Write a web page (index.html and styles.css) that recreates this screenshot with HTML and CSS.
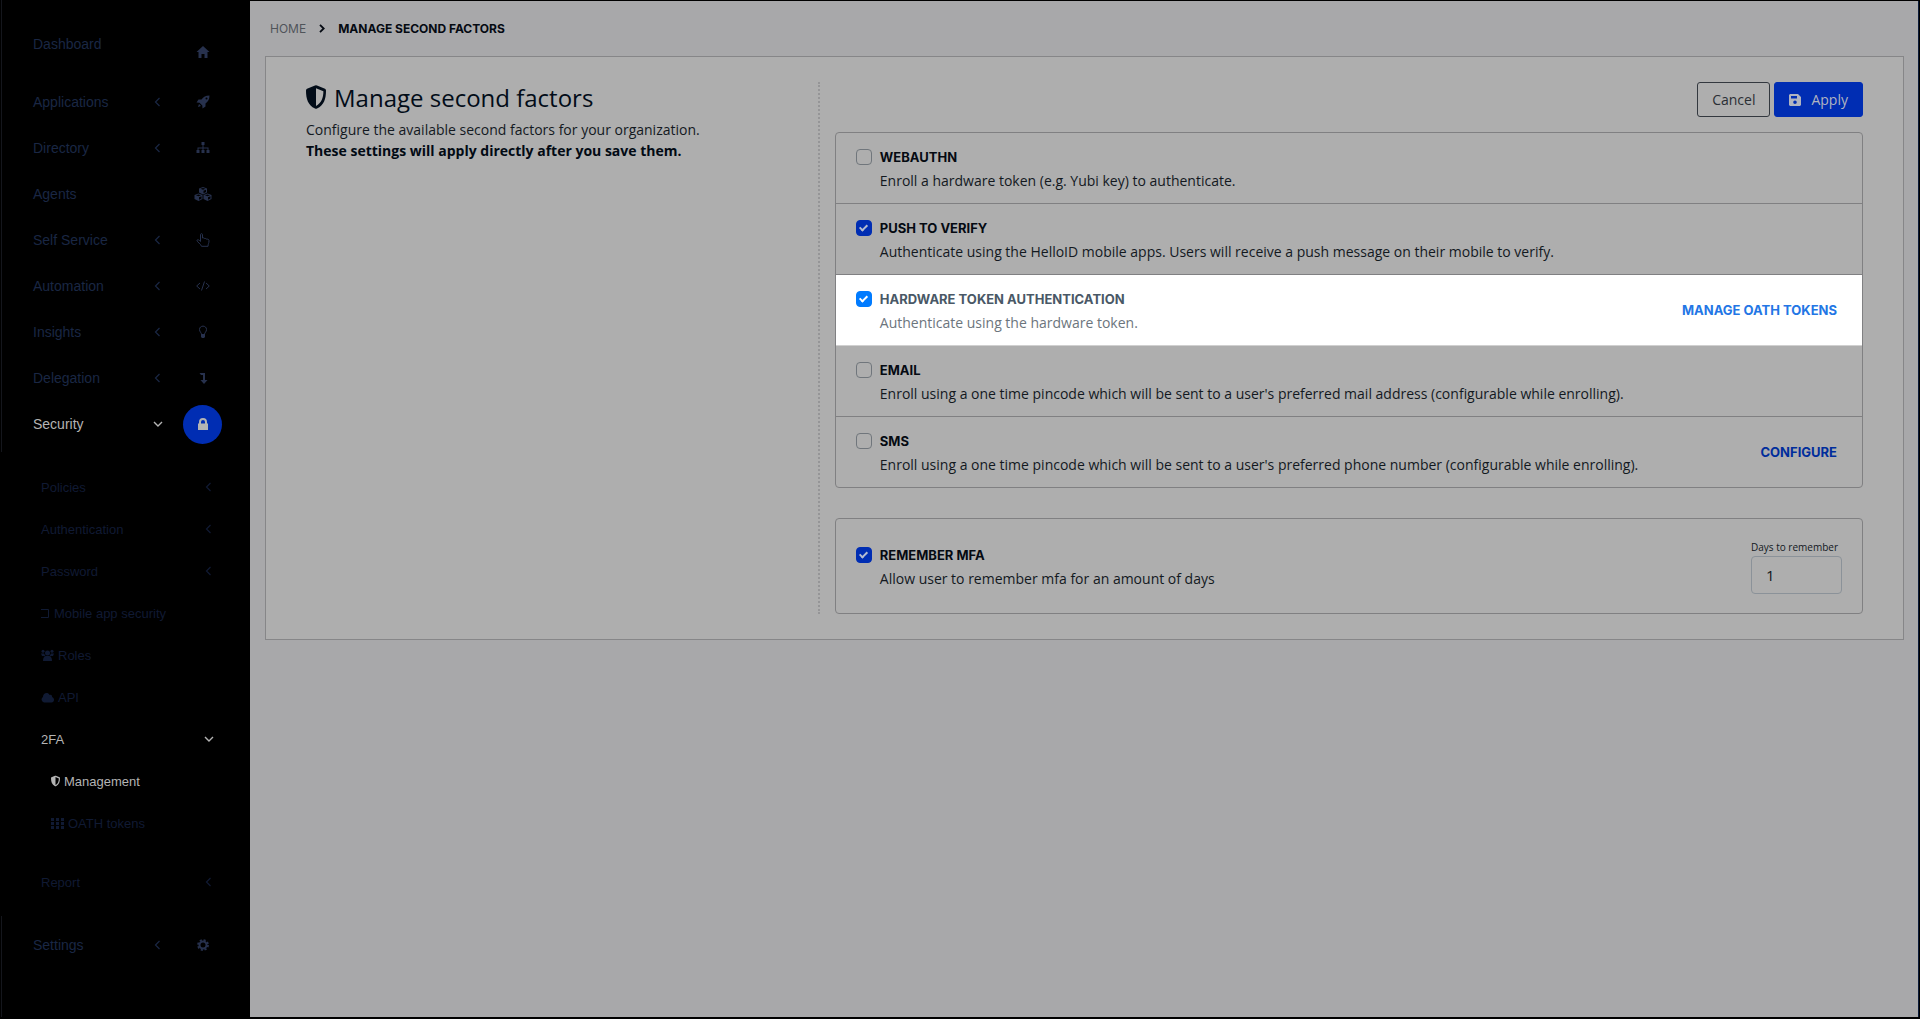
FILE: index.html
```html
<!DOCTYPE html>
<html lang="en">
	<head>
		<meta charset="utf-8">
		<title>Manage second factors</title>
		<link rel="stylesheet" href="styles.css">
	</head>
	<body>
		<!-- shared chevrons -->
		<svg class="defs" width="0" height="0">
			<symbol id="left" viewBox="0 0 10 10"><path d="M6.500 1 2.500 5l4 4" fill="none" stroke="currentColor" stroke-width="1.200"/></symbol>
			<symbol id="down" viewBox="0 0 10 10"><path d="M1 3l4 4 4-4" fill="none" stroke="currentColor" stroke-width="1.400"/></symbol>
			<symbol id="shield" viewBox="0 0 20 24"><path fill-rule="evenodd" d="M9 .4Q10-.1 11 .4L19 3.800Q20 4.300 20 5.500C20 14 18 20 11 23.600Q10 24.100 9 23.600C2 20 0 14 0 5.500Q0 4.300 1 3.800ZM10 3.200V21C15.500 18 17.300 13 17.400 6.300Z" fill="currentColor"/></symbol>
		</svg>
		<nav class="sidebar">
			<ul class="menu edge">
				<li class="first"><a href="#"><span>Dashboard</span>
					<i class="icon"><svg width="14" height="14" viewBox="0 0 14 14"><path d="M7 1 0.500 7h2v6h3V9h3v4h3V7h2z" fill="currentColor"/></svg></i></a></li>
				<li><a href="#"><span>Applications</span><svg class="arrow"><use href="#left"/></svg>
					<i class="icon"><svg width="14" height="14" viewBox="0 0 14 14"><path fill-rule="evenodd" d="M13.500.5c-4 0-6 1.500-8 4H2.500L.5 7.500l3 .2L6.300 10.500l.2 3 3-2V8.500c2.500-2 4-4 4-8zM10.500 2.500a1 1 0 1 1 0 2 1 1 0 0 1 0-2zM3 9l2 2-3 1z" fill="currentColor"/></svg></i></a></li>
				<li><a href="#"><span>Directory</span><svg class="arrow"><use href="#left"/></svg>
					<i class="icon"><svg width="14" height="14" viewBox="0 0 14 14"><path d="M5.500 1h3v3h-1v2.500h5V9h1v3h-3V9h1V7.500h-4V9h1v3h-3V9h1V7.500h-4V9h1v3h-3V9h1V6.500h5V4h-1z" fill="currentColor"/></svg></i></a></li>
				<li><a href="#"><span>Agents</span>
					<i class="icon"><svg width="18" height="14" viewBox="0 0 18 14"><g fill="currentColor"><path id="cube" d="M9 0l4 1.500v4L9 7.500 5 5.500v-4zM6.500 1.800 9 2.800l2.500-1L9 1zM9.500 3.700v2.600L12 5V2.700z" fill-rule="evenodd"/><use href="#cube" x="-4.500" y="6.500"/><use href="#cube" x="4.500" y="6.500"/></g></svg></i></a></li>
				<li><a href="#"><span>Self Service</span><svg class="arrow"><use href="#left"/></svg>
					<i class="icon"><svg width="14" height="14" viewBox="0 0 14 14"><path d="M4.500 8.500V1.700c0-1.400 2-1.400 2 0V5c2-.5 2 .5 2 .5 2-.3 2 .7 2 .7 2-.3 2.500.5 2.500 1.500 0 3-1 3-1 5.600H5.500C5 11 1 9 1 7.600c0-1.500 2-1 3.500.9" fill="none" stroke="currentColor"/></svg></i></a></li>
				<li><a href="#"><span>Automation</span><svg class="arrow"><use href="#left"/></svg>
					<i class="icon"><svg width="14" height="14" viewBox="0 0 14 14"><path d="M4 4 .7 7 4 10M10 4l3.300 3L10 10M8.500 2.500l-3 9" fill="none" stroke="currentColor"/></svg></i></a></li>
				<li><a href="#"><span>Insights</span><svg class="arrow"><use href="#left"/></svg>
					<i class="icon"><svg width="14" height="14" viewBox="0 0 14 14"><path d="M5.500 9.500C5.500 7.500 3.500 7 3.500 4.500c0-4.500 7-4.500 7 0 0 2.500-2 3-2 5" fill="none" stroke="currentColor"/><path d="M5 9h4v3L8 13H6l-1-1z" fill="currentColor"/></svg></i></a></li>
				<li><a href="#"><span>Delegation</span><svg class="arrow"><use href="#left"/></svg>
					<i class="icon"><svg width="14" height="14" viewBox="0 0 14 14"><path d="M3.500 2h5.500V9h2.500L8 13 4.500 9H7V4H5z" fill="currentColor"/></svg></i></a></li>
				<li class="active"><a href="#"><span>Security</span><svg class="arrow"><use href="#down"/></svg>
					<i class="icon"><svg width="14" height="14" viewBox="0 0 14 14"><path d="M2 6.500h10V13H2z" fill="currentColor"/><path d="M4 7V5c0-4 6-4 6 0V7" fill="none" stroke="currentColor" stroke-width="2"/></svg></i></a></li>
			</ul>
			<ul class="submenu">
				<li><a href="#"><span>Policies</span><svg class="arrow"><use href="#left"/></svg></a></li>
				<li><a href="#"><span>Authentication</span><svg class="arrow"><use href="#left"/></svg></a></li>
				<li><a href="#"><span>Password</span><svg class="arrow"><use href="#left"/></svg></a></li>
				<li><a href="#"><svg width="9" height="9" viewBox="0 0 9 9"><path d="M0 .5h7.500v8H0" fill="none" stroke="currentColor"/></svg><span>Mobile app security</span></a></li>
				<li><a href="#"><svg width="13" height="13" viewBox="0 0 13 13"><g fill="currentColor"><circle cx="6.500" cy="4" r="2.500"/><circle cx="2" cy="2.200" r="1.500"/><circle cx="11" cy="2.200" r="1.500"/><path d="M0 4.500h3l1.500 2.500H1zM13 4.500h-3L8.500 7H12zM2 12c0-3 1-5 3-5h3c2 0 3 2 3 5z"/></g></svg><span>Roles</span></a></li>
				<li><a href="#"><svg width="13" height="11" viewBox="0 0 13 11"><path d="M3 10.500A3 3 0 0 1 2 5C1.800 1 7-.5 8.500 3c1.500-.8 3 .5 2.500 2 3 1 2.500 5.500-.5 5.500z" fill="currentColor"/></svg><span>API</span></a></li>
				<li class="active"><a href="#"><span>2FA</span><svg class="arrow"><use href="#down"/></svg></a></li>
				<li class="sub active"><a href="#"><svg width="9" height="12"><use href="#shield"/></svg><span>Management</span></a></li>
				<li class="sub"><a href="#"><svg width="13" height="11" viewBox="0 0 13 11"><path d="M0 0h3v3H0zM5 0h3v3H5zM10 0h3v3h-3zM0 4h3v3H0zM5 4h3v3H5zM10 4h3v3h-3zM0 8h3v3H0zM5 8h3v3H5zM10 8h3v3h-3z" fill="currentColor"/></svg><span>OATH tokens</span></a></li>
				<li class="report"><a href="#"><span>Report</span><svg class="arrow"><use href="#left"/></svg></a></li>
			</ul>
			<ul class="menu edge last">
				<li><a href="#"><span>Settings</span><svg class="arrow"><use href="#left"/></svg>
					<i class="icon"><svg width="14" height="14" viewBox="0 0 14 14"><circle cx="7" cy="7" r="3.500" fill="none" stroke="currentColor" stroke-width="2"/><circle cx="7" cy="7" r="5" fill="none" stroke="currentColor" stroke-width="1.800" stroke-dasharray="2.100 1.827"/></svg></i></a></li>
			</ul>
		</nav>
		<main class="content">
			<div class="breadcrumb">
				<a href="#">Home</a>
				<svg width="6" height="9" viewBox="0 0 6 9"><path d="M1 .8l3.700 3.700L1 8.200" fill="none" stroke="currentColor" stroke-width="1.800"/></svg>
				<b>Manage second factors</b>
			</div>
			<section class="panel">
				<div class="intro">
					<h1><svg width="20" height="24"><use href="#shield"/></svg>Manage second factors</h1>
					<p>Configure the available second factors for your organization.</p>
					<p><strong>These settings will apply directly after you save them.</strong></p>
				</div>
				<form class="settings">
					<div class="buttons">
						<button type="button" class="btn">Cancel</button>
						<button type="button" class="btn primary"><svg width="12" height="12" viewBox="0 0 12 12"><path fill-rule="evenodd" d="M1 0h8l3 3v8l-1 1H1l-1-1V1zM2 2v2.500h6V2zM6 6.500a1.800 1.800 0 1 0 0 3.600 1.800 1.800 0 0 0 0-3.600z" fill="currentColor"/></svg>Apply</button>
					</div>
					<div class="card">
						<div class="factor">
							<input type="checkbox" id="webauthn">
							<label for="webauthn"><b>WebAuthn</b><span>Enroll a hardware token (e.g. Yubi key) to authenticate.</span></label>
						</div>
						<div class="factor">
							<input type="checkbox" id="push" checked>
							<label for="push"><b>Push to verify</b><span>Authenticate using the HelloID mobile apps. Users will receive a push message on their mobile to verify.</span></label>
						</div>
						<div class="factor highlight">
							<input type="checkbox" id="hardware" checked>
							<label for="hardware"><b>Hardware token authentication</b><span>Authenticate using the hardware token.</span></label>
							<a href="#">Manage OATH tokens</a>
						</div>
						<div class="factor">
							<input type="checkbox" id="email">
							<label for="email"><b>Email</b><span>Enroll using a one time pincode which will be sent to a user's preferred mail address (configurable while enrolling).</span></label>
						</div>
						<div class="factor">
							<input type="checkbox" id="sms">
							<label for="sms"><b>SMS</b><span>Enroll using a one time pincode which will be sent to a user's preferred phone number (configurable while enrolling).</span></label>
							<a href="#">Configure</a>
						</div>
					</div>
					<div class="card">
						<div class="factor remember">
							<input type="checkbox" id="remember" checked>
							<label for="remember"><b>Remember MFA</b><span>Allow user to remember mfa for an amount of days</span></label>
							<div class="days">
								<label for="days">Days to remember</label>
								<input type="text" id="days" value="1">
							</div>
						</div>
					</div>
				</form>
			</section>
		</main>
	</body>
</html>
```

FILE: styles.css
```css
*{
	box-sizing:border-box;
}
body{
	margin:0;
	min-height:100vh;
	display:flex;
	background-color:#000;
	font-family:"Open Sans", "Noto Sans", sans-serif;
	font-size:14px;
	color:#13191f;
}
a{
	color:inherit;
	text-decoration:none;
}
ul{
	list-style:none;
	margin:0;
	padding:0;
}
svg{
	flex:none;
}
.defs{
	position:absolute;
}

/* sidebar */
.sidebar{
	flex:none;
	width:250px;
	display:flex;
	flex-direction:column;
	font-family:"Liberation Sans", Arial, sans-serif;
	color:#1a2744; /*dimmed blue*/
}
.edge{
	border-left:1px solid #14161c;
	margin-left:1px;
}
.menu{
	padding:17px 28px 5px 31px;
}
.menu a{
	display:flex;
	align-items:center;
	height:46px;
}
.menu span{
	flex:1;
}
.first a{
	height:62px;
}
.first span{
	padding-bottom:8px;
}
.arrow{
	width:10px;
	height:10px;
}
.icon{
	display:flex;
	align-items:center;
	justify-content:center;
	width:39px;
	height:39px;
	margin-left:20px;
	border-radius:50%;
	color:#27314d;
}
.first .icon{
	padding-top:8px;
}
.sidebar .active, .active .icon{
	color:#b4b4b4;
}
.active .icon{
	background-color:#002db3; /*blue*/
}
.submenu{
	padding:14px 36px 0 41px;
	font-size:13px;
	color:#101a33;
}
.submenu a{
	display:flex;
	align-items:center;
	gap:4px;
	height:42px;
}
.submenu .arrow{
	margin-left:auto;
}
.submenu .sub{
	padding-left:10px;
}
.submenu .report{
	padding-top:17px;
}
.last{
	flex:1;
	margin-top:13px;
	margin-bottom:2px;
	padding-top:6px;
}

/* page */
.content{
	flex:1;
	margin:1px 1px 2px 0;
	padding:17px 14px 17px 15px;
	border-right:1px solid #0a1a38;
	background-color:#a8a8aa;
}
.breadcrumb{
	display:flex;
	align-items:center;
	gap:13px;
	height:20px;
	margin-bottom:18px;
	padding-left:5px;
	font-family:Inter, sans-serif;
	font-size:12px;
	text-transform:uppercase;
	color:#050a12;
}
.breadcrumb a{
	color:#50545a;
}
.panel{
	display:grid;
	grid-template-columns:33% 67%;
	padding:25px 40px;
	border:1px solid #868688;
	background-color:#aeaeae;
}
.intro{
	border-right:2px dotted #959597;
}
h1{
	display:flex;
	align-items:center;
	gap:8px;
	height:31px;
	margin:0 0 6px;
	font-size:24px;
	font-weight:500;
	color:#020c18;
}
h1 svg{
	margin-bottom:2px;
}
.intro p{
	margin:0;
	line-height:21px;
}
strong{
	color:#020a14;
}
.settings{
	display:flex;
	flex-direction:column;
	padding-left:15px;
}
.buttons{
	display:flex;
	justify-content:flex-end;
	gap:4px;
	margin-bottom:15px;
}
.btn{
	display:flex;
	align-items:center;
	gap:10px;
	height:35px;
	padding:0 14px;
	border:1px solid #33383f;
	border-radius:3px;
	background:none;
	font:inherit;
	color:#2a2f35;
}
.primary{
	border-color:#002db3;
	background-color:#002db3;
	color:#b0b4c0;
}
.card{
	border:1px solid #808082;
	border-radius:4px;
}
.card + .card{
	margin-top:30px;
}
.factor{
	display:flex;
	align-items:center;
	height:71px;
	padding:0 25px 0 20px;
	border-bottom:1px solid #808082;
}
.factor:last-child{
	height:70px;
	border-bottom:none;
}
.factor > label{
	flex:1;
	display:flex;
	flex-direction:column;
	padding-top:2px;
	line-height:23px;
}
.factor b, .factor > a{
	font-family:Inter, sans-serif;
	font-size:13px;
	text-transform:uppercase;
}
.factor b{
	color:#050a12;
}
.factor > a{
	font-weight:700;
	color:#002d9c;
}
.factor input[type="checkbox"]{
	appearance:none;
	display:flex;
	justify-content:center;
	width:16px;
	height:16px;
	margin:0 8px 22px 0;
	border:1px solid #70767c;
	border-radius:4px;
}
.factor input[type="checkbox"]:checked{
	border-color:#002db3;
	background-color:#002db3;
}
.factor input[type="checkbox"]:checked::before{
	content:"";
	box-sizing:border-box;
	width:5px;
	height:8px;
	margin-top:2px;
	border:solid #b4bcd0;
	border-width:0 2px 2px 0;
	transform:rotate(45deg);
}
.highlight{
	border-color:#d0d0d0;
	background-color:#fff;
	color:#6c757d;
}
.factor.highlight b{
	color:#495866;
}
.factor.highlight > a{
	color:#2376e5;
}
.factor.highlight input:checked{
	border-color:#007bff;
	background-color:#007bff;
}
.factor.highlight input:checked::before{
	border-color:#fff;
}
.factor.remember{
	height:94px;
	padding-right:20px;
}
.days{
	display:flex;
	flex-direction:column;
	width:91px;
	font-size:10px;
	line-height:17px;
	white-space:nowrap;
}
.days input{
	width:100%;
	height:38px;
	padding:0 14px;
	border:1px solid #8b9299;
	border-radius:4px;
	background:none;
	font:inherit;
	font-size:15px;
	color:#10151a;
}
```
